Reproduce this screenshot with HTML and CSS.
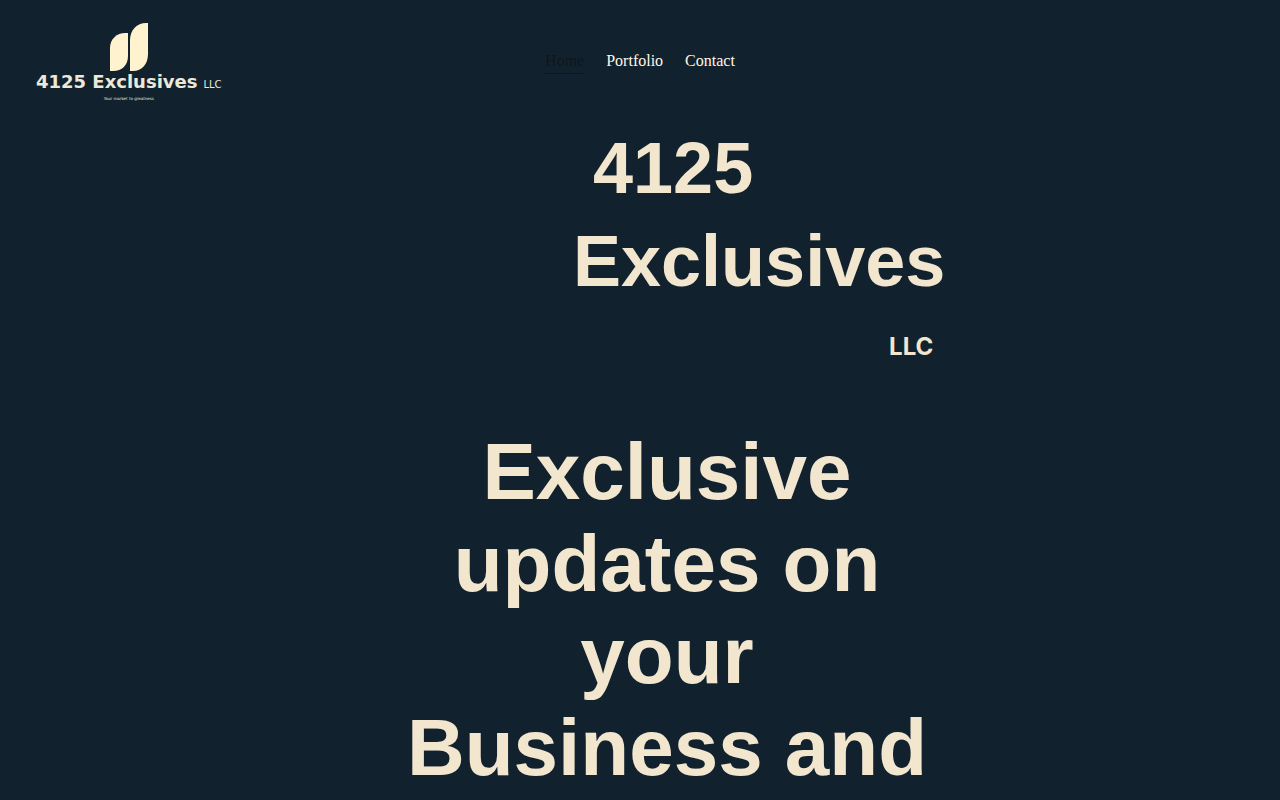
FILE: index.html
```html
<!DOCTYPE html>
<html lang="en">
<head>
<meta charset="utf-8">
<meta name="viewport" content="width=device-width, initial-scale=1">
<title>4125 Exclusives LLC</title>
<link rel="stylesheet" href="styles.css">
</head>
<body>
<header class="header">
  <a class="logo" href="#" aria-label="4125 Exclusives LLC home">
    <svg class="logo-mark" width="40" height="50" viewBox="0 0 40 50" aria-hidden="true">
      <path d="M1 49V26C1 17 8 11 16 11H19V34C19 43 13 49 4 49Z"/>
      <path d="M21 49V18C21 8 28 1 37 1H39V32C39 42 33 49 24 49Z"/>
    </svg>
    <span class="logo-name">4125 Exclusives<span class="logo-suffix">LLC</span></span>
    <span class="logo-line">Your market to greatness</span>
  </a>
  <nav class="nav">
    <a class="nav-link is-active" href="#">Home</a>
    <a class="nav-link" href="#">Portfolio</a>
    <a class="nav-link" href="#">Contact</a>
  </nav>
</header>
<main class="hero">
  <h1 class="title">
    <span class="title-number">4125</span>
    <span class="title-name">Exclusives</span>
    <span class="title-suffix">LLC</span>
  </h1>
  <h2 class="tagline">Exclusive updates on your Business and</h2>
</main>
</body>
</html>
```
FILE: styles.css
```css
* { box-sizing: border-box; }
body {
  margin: 0;
  background: #11222e;
  color: #f2e6cf;
  font-family: "Liberation Serif", "Times New Roman", serif;
}
.header {
  display: grid;
  grid-template-columns: 1fr auto 1fr;
  align-items: center;
  padding: 22px 36px 0;
}
.logo {
  justify-self: start;
  display: flex;
  flex-direction: column;
  align-items: center;
  color: #eee8d8;
  text-decoration: none;
  font-family: "DejaVu Sans", sans-serif;
}
.logo-mark { display: block; fill: #fff3cf; }
.logo-name { font-size: 18px; font-weight: 700; line-height: 20px; }
.logo-suffix { font-size: 10px; font-weight: 400; margin-left: 6px; }
.logo-line { font-size: 4px; line-height: 8px; }
.nav { display: flex; gap: 22px; }
.nav-link {
  padding-bottom: 2px;
  border-bottom: 1px solid transparent;
  color: #fff8e8;
  font-size: 16px;
  line-height: 20px;
  text-decoration: none;
}
.nav-link.is-active { color: #111518; border-color: #111518; }
.hero {
  padding: 24px 0 8px 54px;
  font-family: "Liberation Sans", Arial, sans-serif;
}
.title {
  display: flex;
  flex-direction: column;
  gap: 10px;
  width: fit-content;
  margin: 0 0 0 calc(50% - 94px);
  font-size: 72px;
  line-height: 83px;
}
.title-number { padding-left: 20px; }
.title-suffix {
  align-self: flex-end;
  padding: 19px 12px 0 0;
  font-family: Inter, sans-serif;
  font-size: 24px;
  line-height: 30px;
}
.tagline {
  max-width: 540px;
  margin: 64px auto 0;
  font-size: 80px;
  line-height: 92px;
  text-align: center;
}
```
